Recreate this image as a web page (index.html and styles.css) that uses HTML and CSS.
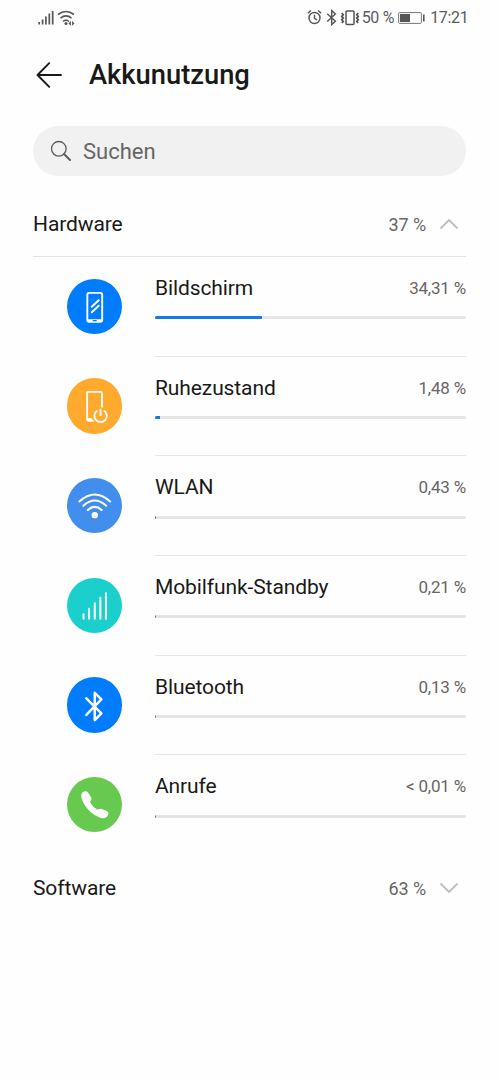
FILE: index.html
```html
<!DOCTYPE html>
<html lang="de">
<head>
<meta charset="utf-8">
<title>Akkunutzung</title>
<link rel="stylesheet" href="styles.css">
</head>
<body>
<div class="status">
  <svg class="status-left" width="40" height="18" viewBox="0 0 40 18" fill="none" stroke="#555">
    <path d="M2.200 15.500v-2.500M5.600 15.500v-5M8.900 15.500v-8M12.300 15.500v-11M15.700 15.500v-13.500" stroke-width="1.700"/>
    <path d="M21 5.500Q29-.5 37 5.500M23.500 9.200Q29 4.700 34.500 9.200M26 12.500Q29 10 32 12.500" stroke-width="1.600"/>
    <circle cx="29" cy="14.400" r="1.500" fill="#555" stroke="none"/>
    <path d="M33.900 12v4.800l-2.400-2.400zM35.100 12v4.800l2.400-2.400z" fill="#555" stroke="none"/>
  </svg>
  <div class="status-right">
    <svg class="status-icons" width="54" height="18" viewBox="0 0 54 18" fill="none" stroke="#555" stroke-width="1.400">
      <circle cx="7.500" cy="9" r="5.500"/><path d="M7.500 5.700v3.600l2.500 1.500M.9 4.300L3.800 1.500M14.100 4.300L11.200 1.500"/>
      <path d="M20.200 4.700l8.200 7.500-3.700 3.400V1.500l3.700 3.400-8.200 7.500"/>
      <rect x="39" y="1.900" width="8" height="13.500" rx="1" stroke-width="1.500"/>
      <path d="M34.800 4l1.400 1.700-1.400 1.700 1.400 1.700-1.400 1.700 1.400 1.700-1.400 1.500M51.200 4l-1.400 1.700 1.400 1.700-1.400 1.700 1.400 1.700-1.400 1.700 1.400 1.500" stroke-width="1.800"/>
    </svg>
    <span class="charge">50 %</span>
    <svg class="battery" width="27" height="12" viewBox="0 0 27 12">
      <rect x=".6" y=".6" width="22.800" height="10.800" rx="1" fill="none" stroke="#777"/>
      <path d="M2 2h10v8H2zM25 2.500h1.600v7H25z" fill="#555"/>
    </svg>
    <span class="clock">17:21</span>
  </div>
</div>
<header class="header">
  <svg class="back" width="27" height="26" viewBox="0 0 27 26" fill="none" stroke="#191919" stroke-width="1.900" stroke-linecap="round" stroke-linejoin="round"><path d="M25 13H1.500M13.200 1.200L1.500 13l11.700 11.800"/></svg>
  <h1 class="title">Akkunutzung</h1>
</header>
<div class="search">
  <svg width="22" height="22" viewBox="0 0 22 22" fill="none" stroke="#5c5c5c"><circle cx="8.800" cy="8.800" r="7.300" stroke-width="1.300"/><path d="M14 14l6 6" stroke-width="2" stroke-linecap="round"/></svg>
  <span>Suchen</span>
</div>
<main>
  <div class="section hardware">
    <h2 class="section-name">Hardware</h2><span class="total">37 %</span>
    <svg class="chevron" width="20" height="12" viewBox="0 0 20 12"><path d="M1.500 10.500L10 2l8.500 8.500"/></svg>
  </div>
  <ul class="list">
    <li class="row">
      <div class="icon screen"><svg viewBox="0 0 56 56"><rect x="20.500" y="14" width="15" height="29" rx="1.800" stroke-width="1.900"/><path d="M20 40.500h16v2q0 1.500-1.500 1.500h-13q-1.500 0-1.500-1.500z" fill="#fff" stroke="none"/><path d="M26.500 42h3" stroke="#007dff" stroke-width="1.200"/><path d="M25 28l7-6.500M25 33.500l7-6.500" stroke-width="2"/></svg></div>
      <div class="detail"><div class="labels"><span class="name">Bildschirm</span><span class="share">34,31 %</span></div><div class="track"><div class="fill" style="width:34.310%"></div></div></div>
    </li>
    <li class="row">
      <div class="icon idle"><svg viewBox="0 0 56 56"><path d="M35.300 29V15.500q0-1.500-1.500-1.500h-12q-1.500 0-1.500 1.500v26q0 1.500 1.500 1.500H26" stroke-width="1.900"/><path d="M20 40.500h5l2 3.500h-5.500q-1.500 0-1.500-1.500z" fill="#fff" stroke="none"/><path d="M30 33.200a6.300 6.300 0 1 0 7.800 0M33.900 32v5.500" stroke-width="1.900"/></svg></div>
      <div class="detail"><div class="labels"><span class="name">Ruhezustand</span><span class="share">1,48 %</span></div><div class="track"><div class="fill" style="width:1.480%"></div></div></div>
    </li>
    <li class="row">
      <div class="icon wlan"><svg viewBox="0 0 56 56"><path d="M12.500 23.700Q28 9.500 43.500 23.700M16.500 28Q28 17.500 39.500 28M21 32.300Q28 26 35 32.300" stroke-width="2"/><circle cx="28" cy="37.500" r="3.200" fill="#fff" stroke="none"/></svg></div>
      <div class="detail"><div class="labels"><span class="name">WLAN</span><span class="share">0,43 %</span></div><div class="track"><div class="fill" style="width:.430%"></div></div></div>
    </li>
    <li class="row">
      <div class="icon mobile"><svg viewBox="0 0 56 56"><path d="M16.700 41v-4.500M22.300 41v-10M28 41v-15.500M33.700 41v-21M39.300 41v-25.500" stroke-width="2"/></svg></div>
      <div class="detail"><div class="labels"><span class="name">Mobilfunk-Standby</span><span class="share">0,21 %</span></div><div class="track"><div class="fill" style="width:.210%"></div></div></div>
    </li>
    <li class="row">
      <div class="icon bluetooth"><svg viewBox="0 0 56 56"><path d="M19.500 21.500l15.200 15.200L28 43.500V16l6.700 6.500-15.200 15.800" stroke-width="2.500"/></svg></div>
      <div class="detail"><div class="labels"><span class="name">Bluetooth</span><span class="share">0,13 %</span></div><div class="track"><div class="fill" style="width:.130%"></div></div></div>
    </li>
    <li class="row">
      <div class="icon calls"><svg viewBox="0 0 56 56"><path d="M16.200 15.200C18 13.800 20.200 14 21.400 15.800L24.500 21C25.200 22.500 24.400 23.500 23.200 25C25 29 27.500 31.300 31 33C32.500 32 33.800 31.800 35.200 32.300L40.500 34.500C42 35.500 42.200 37 41.300 38.700C40 41.500 37 42.200 33.500 41.200C24.500 37.800 17 29.500 14.600 21C14 18.500 14.500 16.500 16.200 15.200z" fill="#fff" stroke="none"/></svg></div>
      <div class="detail"><div class="labels"><span class="name">Anrufe</span><span class="share">&lt; 0,01 %</span></div><div class="track"><div class="fill" style="width:.080%"></div></div></div>
    </li>
  </ul>
  <div class="section">
    <h2 class="section-name">Software</h2><span class="total">63 %</span>
    <svg class="chevron" width="20" height="12" viewBox="0 0 20 12"><path d="M1.500 1.500L10 10l8.500-8.500"/></svg>
  </div>
</main>
</body>
</html>
```
FILE: styles.css
```css
* { box-sizing: border-box; }
body { margin: 0; background: #fefefe; color: #191919; font-family: Roboto, "Liberation Sans", sans-serif; height: 1080px; overflow: hidden; }
svg { display: block; flex: none; }
.status { height: 35px; padding: 0 30.500px 0 37px; display: flex; align-items: center; justify-content: space-between; color: #5c5c5c; font-size: 16px; letter-spacing: -.3px; }
.status-right { display: flex; align-items: center; white-space: nowrap; }
.charge { margin-left: 1px; }
.battery { margin: 0 5px 0 4px; }
.header { height: 79px; padding: 0 36px; display: flex; align-items: center; gap: 26px; }
.title { margin: 0; padding-top: 1px; font-size: 27.300px; font-weight: 500; line-height: 32px; }
.search { height: 50px; margin: 12px 33px 0; padding: 0 17px; border-radius: 25px; background: #f1f1f1; color: #666; display: flex; align-items: center; gap: 11px; font-size: 22px; }
.section { height: 66px; margin: 0 33px; padding-right: 7px; display: flex; align-items: center; }
.hardware { height: 64px; }
.section-name { margin: 0; font-size: 21px; font-weight: 400; letter-spacing: -.1px; flex: 1; }
.total { font-size: 18px; color: #666; letter-spacing: -.1px; }
.chevron { margin-left: 13px; fill: none; stroke: #bdbdbd; stroke-width: 1.8; }
main { padding-top: 16px; }
.list { list-style: none; margin: 0 33px; padding: 0; border-top: 1px solid #e2e2e2; }
.row { height: 99.7px; display: flex; padding-left: 33.500px; gap: 33px; }
.icon { width: 55.500px; height: 55.500px; margin-top: 21.500px; border-radius: 50%; flex: none; }
.icon svg { width: 100%; height: 100%; fill: none; stroke: #fff; stroke-linecap: round; stroke-linejoin: round; }
.screen, .bluetooth { background: #007dff; }
.idle { background: #ffaa2e; }
.wlan { background: #428eec; }
.mobile { background: #1bcfcc; }
.calls { background: #68c951; }
.detail { flex: 1; padding-top: 18px; border-bottom: 1px solid #e5e5e5; }
.row:last-child .detail { border-bottom: 0; }
.labels { display: flex; justify-content: space-between; align-items: center; height: 26px; }
.name { font-size: 21px; letter-spacing: -.1px; }
.share { font-size: 17px; color: #666; letter-spacing: -.2px; }
.track { height: 3px; margin-top: 15.300px; border-radius: 1.500px; background: #e5e5e5; overflow: hidden; }
.fill { height: 100%; background: #1879df; }
```
